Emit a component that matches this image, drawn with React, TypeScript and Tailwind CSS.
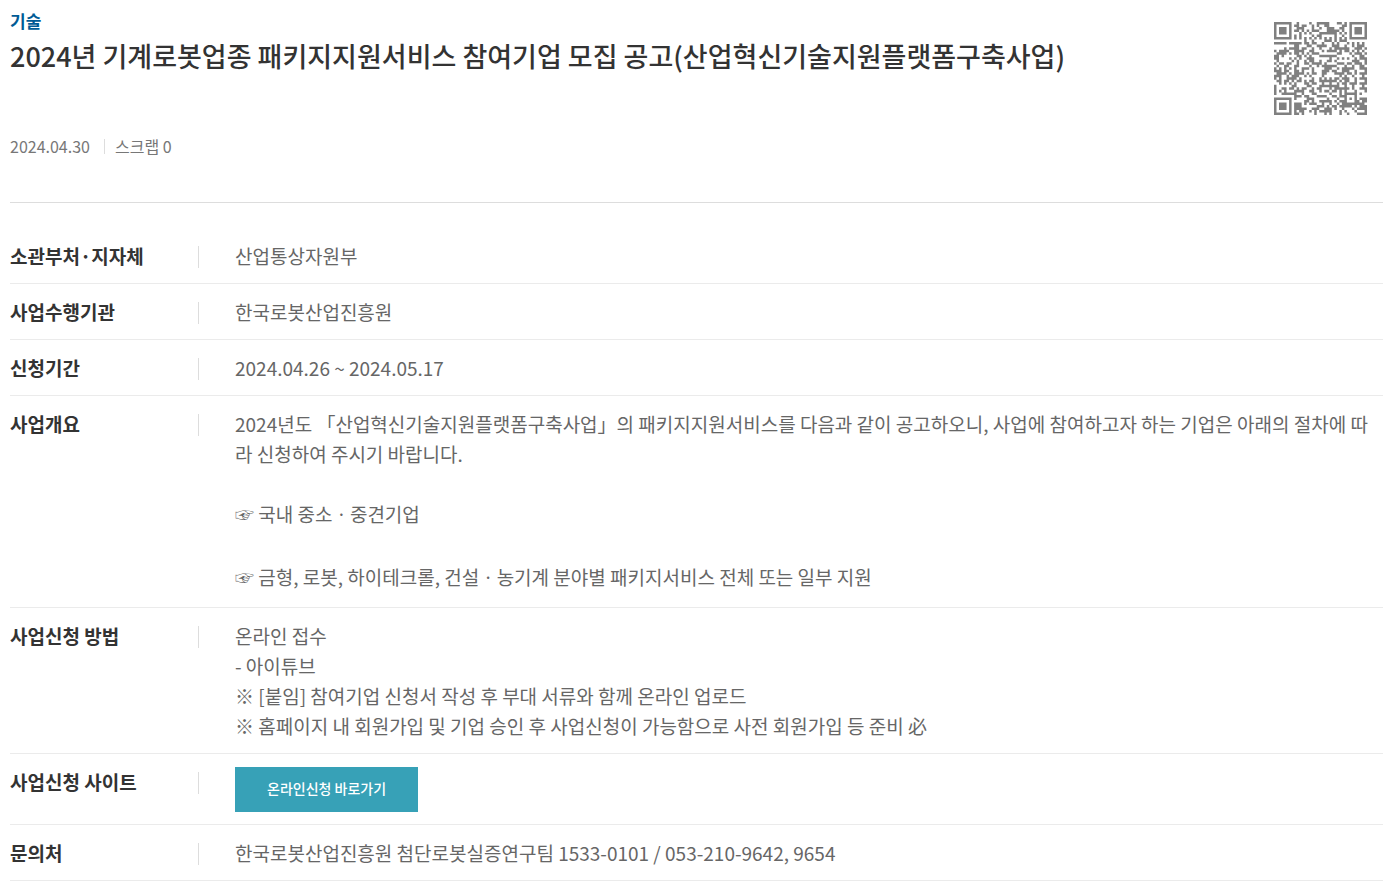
import type { ReactNode } from 'react'

const QR_SIZE = 37

// one number per module row, leftmost module in the highest bit
const QR_ROWS = [
  0x1fc84f8d7f, 0x105b298341, 0x174e24e65d, 0x175ab8fa5d, 0x174547f55d,
  0x10542c1241, 0x1fd555557f, 0x000121d700, 0x1f7db228aa, 0x0018cf392e,
  0x017b245f9d, 0x179e62f5aa, 0x0f5ab80c5d, 0x1a0d47f026, 0x1854e04a97,
  0x082964d039, 0x16c9bd0edd, 0x09984bf126, 0x1553a1cbe7, 0x1d9a23b391,
  0x0f5eb31ed7, 0x1cb9420522, 0x14f4255b97, 0x0dad67f591, 0x0551b24b77,
  0x1030c7f922, 0x136b2c5fa7, 0x151e65b511, 0x13f23045f4, 0x001d8f3710,
  0x1fd0e08957, 0x1041a7d71b, 0x175d724bfe, 0x175c0eb7d7, 0x175f39d22f,
  0x105657c511, 0x1fda11448f,
]

const QR_PATH = QR_ROWS.map((row, y) =>
  row
    .toString(2)
    .padStart(QR_SIZE, '0')
    .split('')
    .map((bit, x) => (bit === '1' ? `M${x} ${y}h1v1h-1z` : ''))
    .join(''),
).join('')

interface InfoRowProps {
  label: string
  children: ReactNode
}

function InfoRow({ label, children }: InfoRowProps) {
  return (
    <div className="flex border-b border-[#ebebeb] pt-[13px] pb-3">
      <dt className="flex w-[189px] shrink-0 items-start justify-between font-bold text-[#333]">
        {label}
        <span className="mt-[5px] h-[22px] w-px bg-[#ddd]" />
      </dt>
      <dd className="min-w-0 flex-1 break-all pl-9 text-[#666]">{children}</dd>
    </div>
  )
}

export default function App() {
  return (
    <main className="bg-white pl-[10px] pr-[9px] font-['Noto_Sans_CJK_KR',sans-serif]">
      <header className="flex items-start justify-between border-b border-[#ddd] pt-2 pb-11">
        <div>
          <p className="text-[17px] leading-[26px] font-bold text-[#005b96]">기술</p>
          <h1 className="text-[27px] leading-[44px] font-medium text-[#333]">
            2024년 기계로봇업종 패키지지원서비스 참여기업 모집 공고(산업혁신기술지원플랫폼구축사업)
          </h1>
          <div className="mt-14 flex items-center text-[16px] leading-6 text-[#777]">
            <span>2024.04.30</span>
            <span className="mr-[10px] ml-[14px] h-[15px] w-px bg-[#ddd]" />
            <span>스크랩 0</span>
          </div>
        </div>
        <svg
          viewBox={`0 0 ${QR_SIZE} ${QR_SIZE}`}
          className="mt-[14px] mr-4 h-[93px] w-[93px] shrink-0 text-[#808080]"
          aria-hidden="true"
        >
          <path d={QR_PATH} fill="currentColor" />
        </svg>
      </header>

      <dl className="pt-[25px] text-[19px] leading-[30px]">
        <InfoRow label="소관부처·지자체">산업통상자원부</InfoRow>
        <InfoRow label="사업수행기관">한국로봇산업진흥원</InfoRow>
        <InfoRow label="신청기간">2024.04.26 ~ 2024.05.17</InfoRow>
        <InfoRow label="사업개요">
          <p>
            2024년도 「산업혁신기술지원플랫폼구축사업」의 패키지지원서비스를 다음과 같이 공고하오니, 사업에 참여하고자
            하는 기업은 아래의 절차에 따라 신청하여 주시기 바랍니다.
          </p>
          <p className="mt-[30px] pb-[3px]">☞ 국내 중소ㆍ중견기업</p>
          <p className="mt-[30px] pb-[3px]">
            ☞ 금형, 로봇, 하이테크롤, 건설ㆍ농기계 분야별 패키지서비스 전체 또는 일부 지원
          </p>
        </InfoRow>
        <InfoRow label="사업신청 방법">
          <p>온라인 접수</p>
          <p>- 아이튜브</p>
          <p>※ [붙임] 참여기업 신청서 작성 후 부대 서류와 함께 온라인 업로드</p>
          <p>※ 홈페이지 내 회원가입 및 기업 승인 후 사업신청이 가능함으로 사전 회원가입 등 준비 必</p>
        </InfoRow>
        <InfoRow label="사업신청 사이트">
          <a
            href="#"
            className="inline-block bg-[#37a1b7] px-8 pt-1.5 pb-[9px] align-top text-[14px] leading-[30px] font-medium text-white"
          >
            온라인신청 바로가기
          </a>
        </InfoRow>
        <InfoRow label="문의처">한국로봇산업진흥원 첨단로봇실증연구팀 1533-0101 / 053-210-9642, 9654</InfoRow>
      </dl>
    </main>
  )
}
